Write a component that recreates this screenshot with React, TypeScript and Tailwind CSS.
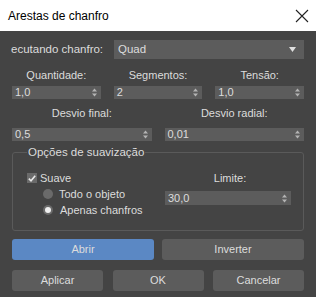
const font = { fontFamily: '"Liberation Sans", Arial, sans-serif' };

function Arrows() {
  return (
    <svg width="5" height="9" viewBox="0 0 5 9" className="shrink-0">
      <path d="M2.5 0.5 L5 3.5 L0 3.5 Z" fill="#b4b4b4" />
      <path d="M0 5.5 L5 5.5 L2.5 8.5 Z" fill="#b4b4b4" />
    </svg>
  );
}

function Spinner({ value, className = '' }: { value: string; className?: string }) {
  return (
    <div
      className={`flex h-[13px] items-center justify-between bg-[#5c5c5c] pl-[3px] pr-[4px] text-[11px] leading-none text-[#dcdcdc] ${className}`}
    >
      <span>{value}</span>
      <Arrows />
    </div>
  );
}

function Btn({ label, primary = false }: { label: string; primary?: boolean }) {
  return (
    <button
      className={`flex h-[21px] items-center justify-center rounded-[3px] text-[11px] text-[#dcdcdc] ${
        primary ? 'bg-[#5b88c4]' : 'bg-[#5c5c5c]'
      }`}
    >
      {label}
    </button>
  );
}

export default function App() {
  return (
    <div className="h-[297px] w-[316px] overflow-hidden bg-[#444444]" style={font}>
      <div className="flex h-[31px] items-center justify-between bg-white pl-[8px] pr-[7px]">
        <span className="text-[12px] text-black">Arestas de chanfro</span>
        <svg width="14" height="14" viewBox="0 0 14 14">
          <path d="M1 1 L13 13 M13 1 L1 13" stroke="#222" strokeWidth="1.1" />
        </svg>
      </div>

      <div className="flex flex-col px-[12px] text-[11px] text-[#dcdcdc]">
        <div className="mt-[9px] flex h-[19px] items-center">
          <span className="-ml-px text-[11.5px]">ecutando chanfro:</span>
          <div className="ml-auto flex h-[19px] w-[190px] items-center justify-between bg-[#5c5c5c] pl-[4px] pr-[8px]">
            <span className="text-[11.5px]">Quad</span>
            <svg width="7" height="5" viewBox="0 0 7 5">
              <path d="M0 0 L7 0 L3.5 5 Z" fill="#e0e0e0" />
            </svg>
          </div>
        </div>

        <div className="mt-[9px] grid grid-cols-3 gap-x-[13px]">
          {[
            ['Quantidade:', '1,0'],
            ['Segmentos:', '2'],
            ['Tensão:', '1,0'],
          ].map(([l, v]) => (
            <div key={l} className="flex flex-col">
              <span className="h-[14px] text-center leading-[14px]">{l}</span>
              <Spinner value={v} className="mt-[4px]" />
            </div>
          ))}
        </div>

        <div className="mt-[7px] grid grid-cols-2 gap-x-[13px]">
          {[
            ['Desvio final:', '0,5'],
            ['Desvio radial:', '0,01'],
          ].map(([l, v]) => (
            <div key={l} className="flex flex-col">
              <span className="h-[14px] text-center leading-[14px]">{l}</span>
              <Spinner value={v} className="mt-[8px]" />
            </div>
          ))}
        </div>

        <fieldset className="mt-[4px] rounded-[3px] border border-[#5a5a5a] pb-[13px] pl-[14px] pr-[12px]">
          <legend className="h-[14px] px-px leading-[14px] text-[11.5px]">Opções de suavização</legend>
          <div className="mt-[12px] flex">
            <div className="flex w-[138px] flex-col">
              <div className="flex h-[14px] items-center">
                <div className="flex h-[10px] w-[10px] items-center justify-center bg-[#6a6a6a]">
                  <svg width="8" height="7" viewBox="0 0 8 7">
                    <path d="M0.8 3.6 L3 5.8 L7.2 0.8" stroke="#e8e8e8" strokeWidth="1.6" fill="none" />
                  </svg>
                </div>
                <span className="ml-[3px]">Suave</span>
              </div>
              <div className="mt-[2px] flex h-[14px] items-center pl-[16px]">
                <span className="h-[10px] w-[10px] rounded-full bg-[#6a6a6a]" />
                <span className="ml-[6px]">Todo o objeto</span>
              </div>
              <div className="mt-[2px] flex h-[14px] items-center pl-[16px]">
                <span className="flex h-[10px] w-[10px] items-center justify-center rounded-full bg-[#6a6a6a]">
                  <span className="h-[6px] w-[6px] rounded-full bg-[#f0f0f0]" />
                </span>
                <span className="ml-[7px]">Apenas chanfros</span>
              </div>
            </div>
            <div className="flex w-[126px] flex-col">
              <span className="h-[14px] pl-[4px] text-center leading-[14px]">Limite:</span>
              <Spinner value="30,0" className="mt-[6px] !h-[14px]" />
            </div>
          </div>
        </fieldset>

        <div className="mt-[8px] grid grid-cols-2 gap-x-[8px]">
          <Btn label="Abrir" primary />
          <Btn label="Inverter" />
        </div>

        <div className="mt-[10px] grid grid-cols-3 gap-x-[9.5px]">
          <Btn label="Aplicar" />
          <Btn label="OK" />
          <Btn label="Cancelar" />
        </div>
      </div>
    </div>
  );
}
